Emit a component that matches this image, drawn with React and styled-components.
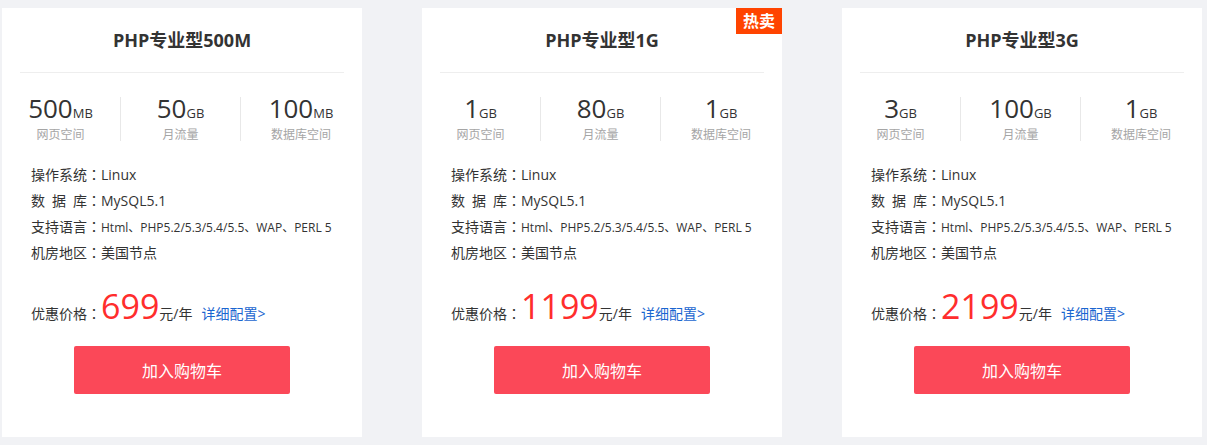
import React from "react";
import styled, { createGlobalStyle } from "styled-components";

const Global = createGlobalStyle`
  html, body {
    margin: 0;
    padding: 0;
    background: #f1f2f5;
  }
  body {
    font-family: "Open Sans", "Noto Sans CJK SC", sans-serif;
    color: #333;
  }
`;

const Page = styled.div`
  display: flex;
  gap: 60px;
  padding: 8px 5px 8px 2px;
`;

const Card = styled.div`
  position: relative;
  width: 360px;
  height: 429px;
  background: #fff;
  display: flex;
  flex-direction: column;
  box-sizing: border-box;
`;

const Badge = styled.div`
  position: absolute;
  top: 0;
  right: 0;
  width: 46px;
  height: 26px;
  line-height: 26px;
  text-align: center;
  background: #ff4400;
  color: #fff;
  font-size: 16px;
  font-weight: 700;
`;

const Title = styled.h3`
  margin: 0;
  height: 64px;
  line-height: 64px;
  text-align: center;
  font-size: 18px;
  font-weight: 700;
  color: #333;
`;

const Divider = styled.div`
  height: 1px;
  margin: 0 18px;
  background: #eeeeee;
`;

const Stats = styled.div`
  display: grid;
  grid-template-columns: repeat(3, 120px);
  margin: 24px 0 0 -1px;
`;

const Stat = styled.div`
  text-align: center;
  height: 44px;
  border-right: ${(p) => (p.$last ? "none" : "1px solid #e8e8e8")};
`;

const StatValue = styled.div`
  line-height: 22px;
  font-size: 26px;
  color: #333;
  white-space: nowrap;
`;

const Unit = styled.span`
  font-size: 13px;
`;

const StatLabel = styled.div`
  line-height: 22px;
  font-size: 12px;
  color: #a5a5a5;
`;

const Specs = styled.ul`
  list-style: none;
  margin: 21px 0 0;
  padding: 0 0 0 29px;
`;

const SpecRow = styled.li`
  display: flex;
  align-items: baseline;
  height: 26px;
  line-height: 26px;
  font-size: 14px;
  color: #333;
  white-space: nowrap;
`;

const SpecLabel = styled.span`
  display: inline-block;
  width: 56px;
  font-size: 14px;
  text-align: justify;
  text-align-last: justify;
`;

const Colon = styled.span`
  font-family: "Noto Sans CJK JP", "Noto Sans CJK SC", sans-serif;
  font-size: 14px;
  line-height: 14px;
`;

const SpecValue = styled.span`
  font-size: ${(p) => p.$size || 14}px;
`;

const PriceRow = styled.div`
  display: flex;
  align-items: baseline;
  height: 40px;
  margin-top: 20px;
  padding-left: 29px;
  line-height: 40px;
  font-size: 14px;
  color: #333;
  white-space: nowrap;
`;

const Price = styled.span`
  font-size: 34px;
  color: #ff2d2d;
`;

const Detail = styled.a`
  margin-left: 9px;
  color: #1a66d0;
  text-decoration: none;
  font-size: 14px;
`;

const Button = styled.button`
  align-self: center;
  margin-top: 20px;
  width: 216px;
  height: 48px;
  border: none;
  border-radius: 2px;
  background: #fb4858;
  color: #fff;
  font-family: inherit;
  font-size: 16px;
  cursor: pointer;
`;

const plans = [
  {
    title: "PHP专业型500M",
    stats: [
      ["500", "MB", "网页空间"],
      ["50", "GB", "月流量"],
      ["100", "MB", "数据库空间"],
    ],
    price: "699",
  },
  {
    title: "PHP专业型1G",
    hot: true,
    stats: [
      ["1", "GB", "网页空间"],
      ["80", "GB", "月流量"],
      ["1", "GB", "数据库空间"],
    ],
    price: "1199",
  },
  {
    title: "PHP专业型3G",
    stats: [
      ["3", "GB", "网页空间"],
      ["100", "GB", "月流量"],
      ["1", "GB", "数据库空间"],
    ],
    price: "2199",
  },
];

const specs = [
  ["操作系统", "Linux", 14],
  ["数据库", "MySQL5.1", 14],
  ["支持语言", "Html、PHP5.2/5.3/5.4/5.5、WAP、PERL 5", 12],
  ["机房地区", "美国节点", 14],
];

function PlanCard({ plan }) {
  return (
    <Card>
      {plan.hot && <Badge>热卖</Badge>}
      <Title>{plan.title}</Title>
      <Divider />
      <Stats>
        {plan.stats.map(([v, u, l], i) => (
          <Stat key={l} $last={i === 2}>
            <StatValue>
              {v}
              <Unit>{u}</Unit>
            </StatValue>
            <StatLabel>{l}</StatLabel>
          </Stat>
        ))}
      </Stats>
      <Specs>
        {specs.map(([label, value, size]) => (
          <SpecRow key={label}>
            <SpecLabel>{label}</SpecLabel>
            <Colon>：</Colon>
            <SpecValue $size={size}>{value}</SpecValue>
          </SpecRow>
        ))}
      </Specs>
      <PriceRow>
        优惠价格<Colon>：</Colon>
        <Price>{plan.price}</Price>元/年
        <Detail href="#">详细配置&gt;</Detail>
      </PriceRow>
      <Button>加入购物车</Button>
    </Card>
  );
}

export default function App() {
  return (
    <>
      <Global />
      <Page>
        {plans.map((p) => (
          <PlanCard key={p.title} plan={p} />
        ))}
      </Page>
    </>
  );
}
